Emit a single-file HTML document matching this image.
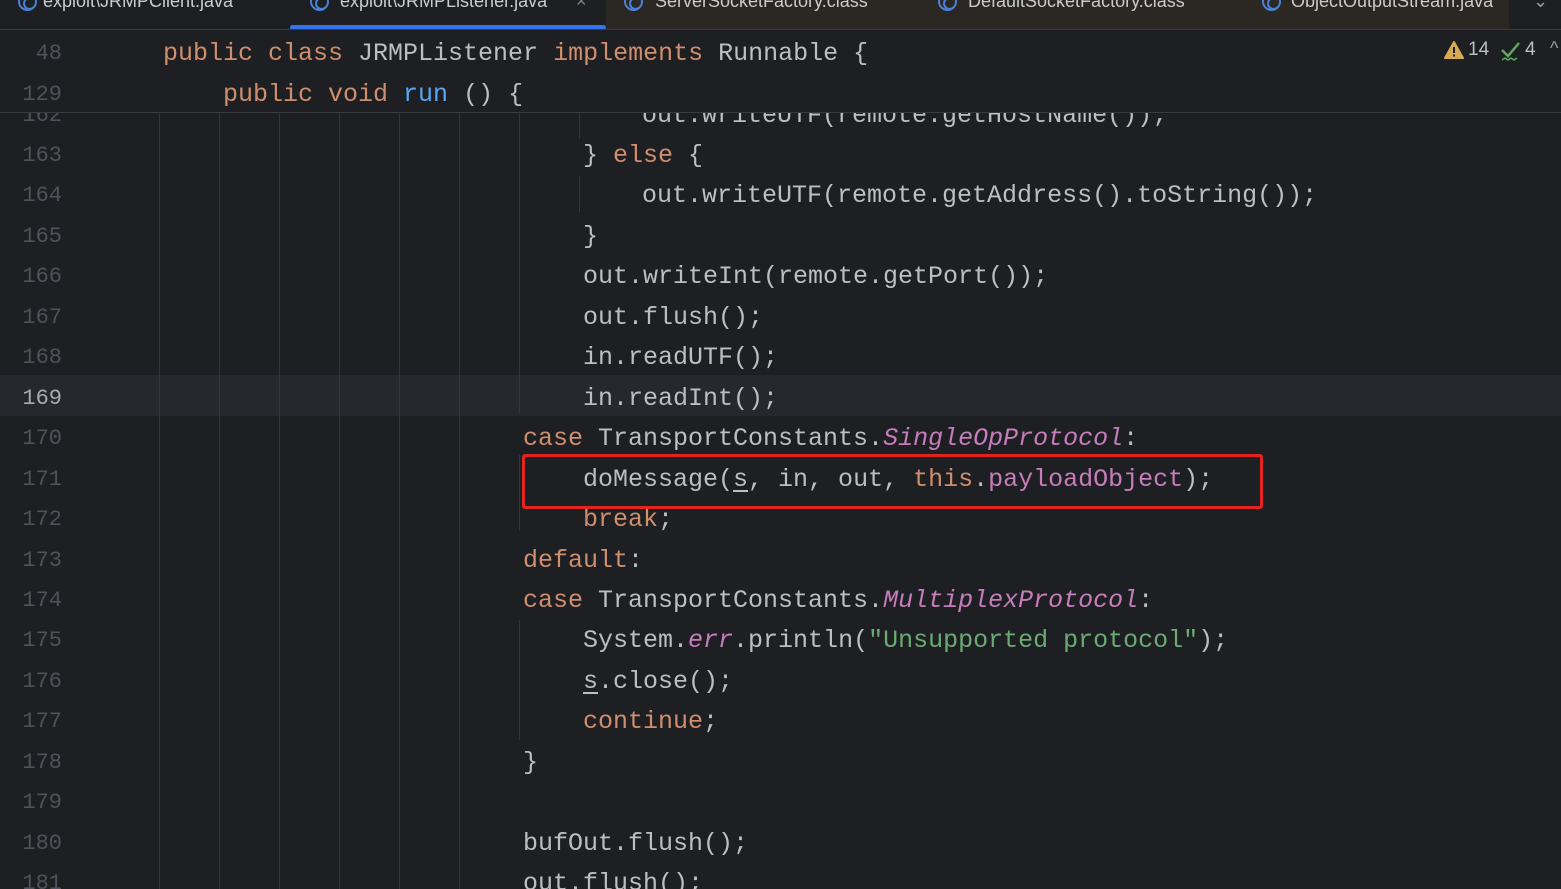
<!DOCTYPE html>
<html><head><meta charset="utf-8"><style>
*{margin:0;padding:0;box-sizing:border-box}
body{width:1561px;height:889px;overflow:hidden;background:#1e1f22;position:relative;font-family:"Liberation Mono",monospace;color:#bcbec4}
.tabs{position:absolute;left:0;top:0;width:1561px;height:30px;background:#1e1f22;border-bottom:1px solid #393b40;overflow:hidden}
.tab{position:absolute;top:-8px;font:18px/18px "Liberation Sans",sans-serif;color:#c9cbd0;white-space:nowrap}
.ic{position:absolute;top:-8px;width:19px;height:19px;border:2px solid #4a80d8;border-radius:50%}
.ic:after{content:"";position:absolute;left:3px;top:3px;width:9px;height:9px;border:2px solid #4a80d8;border-right-color:transparent;border-radius:50%}
.n{position:absolute;left:0;width:62px;text-align:right;font-size:22px;line-height:40px;color:#4e525a;font-family:"Liberation Mono",monospace}
.l{position:absolute;font-size:25px;line-height:40px;white-space:pre}
.k{color:#cf8e6d}.m{color:#56a8f5}.p{color:#c77dbb;font-style:italic}.f{color:#c77dbb}.s{color:#6aab73}.u{text-decoration:underline;text-underline-offset:4px}
.g{position:absolute;width:1px;background:#33353a}
#code{position:absolute;left:0;top:113px;width:1561px;height:776px;overflow:hidden}
#code .n,#code .l{margin-top:2px}
</style></head><body>
<div class="tabs">
<div style="position:absolute;left:606px;top:0;width:903px;height:30px;background:#2b2722"></div>
<div class="ic" style="left:18px"></div><div class="tab" style="left:43px">exploit\JRMPClient.java</div>
<div class="ic" style="left:310px"></div><div class="tab" style="left:340px">exploit\JRMPListener.java</div>
<div class="tab" style="left:576px;color:#7a7e85">×</div>
<div class="ic" style="left:624px"></div><div class="tab" style="left:655px">ServerSocketFactory.class</div>
<div class="ic" style="left:938px"></div><div class="tab" style="left:968px">DefaultSocketFactory.class</div>
<div class="ic" style="left:1262px"></div><div class="tab" style="left:1291px">ObjectOutputStream.java</div>
<div class="tab" style="left:1533px;color:#9a9da3">⌄</div>
<div style="position:absolute;left:290px;top:25px;width:316px;height:5px;background:#3574f0;border-radius:3px"></div>
</div>
<div class="n" style="top:34px">48</div>
<div class="l" style="top:34px;left:163px"><span class="k">public class</span> JRMPListener <span class="k">implements</span> Runnable {</div>
<div class="n" style="top:75px">129</div>
<div class="l" style="top:75px;left:223px"><span class="k">public void</span> <span class="m">run</span> () {</div>
<svg style="position:absolute;left:1444px;top:41px" width="20" height="18"><path d="M10 1 L19 17 L1 17 Z" fill="#d6a953" stroke="#d6a953" stroke-linejoin="round" stroke-width="2"/><rect x="9" y="6" width="2" height="6" fill="#1e1f22"/><rect x="9" y="13.5" width="2" height="2" fill="#1e1f22"/></svg>
<div style="position:absolute;left:1468px;top:39px;font:19px 'Liberation Sans',sans-serif;color:#bcbec4">14</div>
<svg style="position:absolute;left:1500px;top:41px" width="22" height="22"><path d="M2 9 L8 15 L19 2" fill="none" stroke="#5fa860" stroke-width="2.5"/><path d="M2 19 l3-2 3 2 3-2 3 2 3-2" fill="none" stroke="#5fa860" stroke-width="1.5"/></svg>
<div style="position:absolute;left:1525px;top:39px;font:19px 'Liberation Sans',sans-serif;color:#bcbec4">4</div>
<div style="position:absolute;left:1550px;top:38px;font:18px 'Liberation Sans',sans-serif;color:#9a9da3">^</div>
<div style="position:absolute;left:0;top:112px;width:1561px;height:1px;background:#393b40"></div>
<div id="code">
<div style="position:absolute;left:0;top:262px;width:1561px;height:41px;background:#26282e"></div>
<div class="g" style="left:159px;top:0;height:776px"></div>
<div class="g" style="left:219px;top:0;height:776px"></div>
<div class="g" style="left:279px;top:0;height:776px"></div>
<div class="g" style="left:339px;top:0;height:776px"></div>
<div class="g" style="left:399px;top:0;height:776px"></div>
<div class="g" style="left:459px;top:0;height:776px"></div>
<div class="g" style="left:519px;top:0;height:301px"></div>
<div class="g" style="left:519px;top:342px;height:76px"></div>
<div class="g" style="left:519px;top:507px;height:120px"></div>
<div class="g" style="left:579px;top:0;height:26px"></div>
<div class="g" style="left:579px;top:63px;height:36px"></div>
<div class="n" style="top:-19.5px">162</div><div class="l" style="top:-19.5px;left:642px">out.writeUTF(remote.getHostName());</div>
<div class="n" style="top:21px">163</div><div class="l" style="top:21px;left:583px">} <span class="k">else</span> {</div>
<div class="n" style="top:61.4px">164</div><div class="l" style="top:61.4px;left:642px">out.writeUTF(remote.getAddress().toString());</div>
<div class="n" style="top:101.9px">165</div><div class="l" style="top:101.9px;left:583px">}</div>
<div class="n" style="top:142.3px">166</div><div class="l" style="top:142.3px;left:583px">out.writeInt(remote.getPort());</div>
<div class="n" style="top:182.8px">167</div><div class="l" style="top:182.8px;left:583px">out.flush();</div>
<div class="n" style="top:223.2px">168</div><div class="l" style="top:223.2px;left:583px">in.readUTF();</div>
<div class="n" style="top:263.6px;color:#a9abb1">169</div><div class="l" style="top:263.6px;left:583px">in.readInt();</div>
<div class="n" style="top:304.1px">170</div><div class="l" style="top:304.1px;left:523px"><span class="k">case</span> TransportConstants.<span class="p">SingleOpProtocol</span>:</div>
<div class="n" style="top:344.5px">171</div><div class="l" style="top:344.5px;left:583px">doMessage(<span class="u">s</span>, in, out, <span class="k">this</span>.<span class="f">payloadObject</span>);</div>
<div class="n" style="top:385px">172</div><div class="l" style="top:385px;left:583px"><span class="k">break</span>;</div>
<div class="n" style="top:425.5px">173</div><div class="l" style="top:425.5px;left:523px"><span class="k">default</span>:</div>
<div class="n" style="top:465.9px">174</div><div class="l" style="top:465.9px;left:523px"><span class="k">case</span> TransportConstants.<span class="p">MultiplexProtocol</span>:</div>
<div class="n" style="top:506.4px">175</div><div class="l" style="top:506.4px;left:583px">System.<span class="p">err</span>.println(<span class="s">"Unsupported protocol"</span>);</div>
<div class="n" style="top:546.8px">176</div><div class="l" style="top:546.8px;left:583px"><span class="u">s</span>.close();</div>
<div class="n" style="top:587.3px">177</div><div class="l" style="top:587.3px;left:583px"><span class="k">continue</span>;</div>
<div class="n" style="top:627.7px">178</div><div class="l" style="top:627.7px;left:523px">}</div>
<div class="n" style="top:668.2px">179</div>
<div class="n" style="top:708.6px">180</div><div class="l" style="top:708.6px;left:523px">bufOut.flush();</div>
<div class="n" style="top:749px">181</div><div class="l" style="top:749px;left:523px">out.flush();</div>
</div>
<div style="position:absolute;left:522px;top:454px;width:741px;height:55px;border:3px solid #e3231d;border-radius:3px"></div>
</body></html>
